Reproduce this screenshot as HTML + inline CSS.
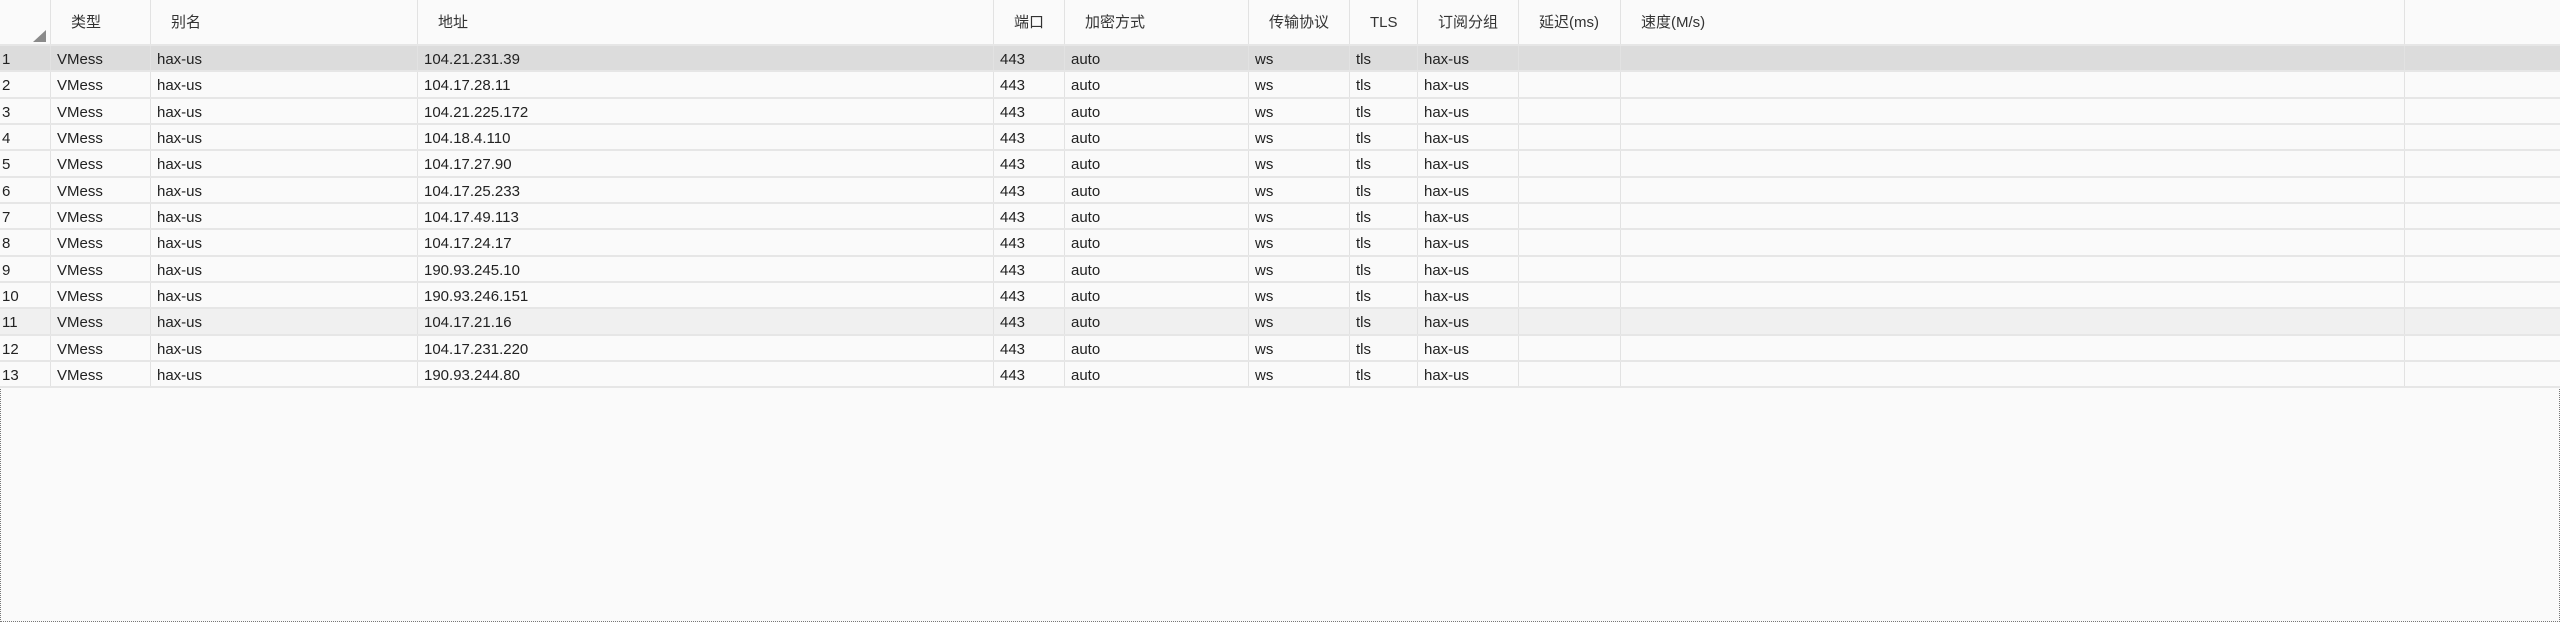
<!DOCTYPE html>
<html><head><meta charset="utf-8"><style>
html,body{margin:0;padding:0;}
body{width:2560px;height:622px;background:#fafafa;position:relative;overflow:hidden;font-family:"Liberation Sans","Noto Sans CJK SC",sans-serif;font-size:15px;color:#222;}
.frame{position:absolute;left:0;top:0;width:2558px;height:620px;border:1px dotted #777;}
.row{position:absolute;left:0;width:2560px;height:26.33px;box-sizing:border-box;border-bottom:2px solid #e6e6e6;}
.c{position:absolute;top:0;height:100%;box-sizing:border-box;border-left:1px solid #e2e2e2;line-height:27px;padding-left:6px;white-space:nowrap;}
.hdr .c{line-height:46px;padding-left:20px;color:#333;}
.hdr{height:46px;top:0;background:#fafafa;border-bottom:2px solid #e6e6e6;}
.c0{left:0;border-left:none;padding-left:2px;}
.hdr .c0{padding-left:0}
</style></head><body>
<div class="frame"></div>
<div id="t"></div>
<script>
var cols=[0,50,150,417,993,1064,1248,1349,1417,1518,1620,2404];
var ends=cols.slice(1).concat([2560]);
function row(cells,top,cls,bg){
 var d=document.createElement('div');d.className='row '+(cls||'');
 if(top!==null)d.style.top=top+'px';if(bg)d.style.background=bg;
 cols.forEach(function(x,i){var c=document.createElement('div');c.className='c'+(i==0?' c0':'');c.style.left=x+'px';c.style.width=(ends[i]-x)+'px';c.textContent=cells[i]||'';d.appendChild(c);});
 document.getElementById('t').appendChild(d);return d;}
var h=row(['','类型','别名','地址','端口','加密方式','传输协议','TLS','订阅分组','延迟(ms)','速度(M/s)',''],0,'hdr');
var tri=document.createElement('div');tri.style.cssText='position:absolute;left:33px;top:30px;width:0;height:0;border-left:13px solid transparent;border-bottom:12px solid #8a8a8a;';h.appendChild(tri);
var ips=['104.21.231.39','104.17.28.11','104.21.225.172','104.18.4.110','104.17.27.90','104.17.25.233','104.17.49.113','104.17.24.17','190.93.245.10','190.93.246.151','104.17.21.16','104.17.231.220','190.93.244.80'];
ips.forEach(function(ip,i){row([String(i+1),'VMess','hax-us',ip,'443','auto','ws','tls','hax-us','','',''],46+i*26.33,'',i==0?'#dcdcdc':(i==10?'#f0f0f0':'#fafafa'));});
</script>
</body></html>
